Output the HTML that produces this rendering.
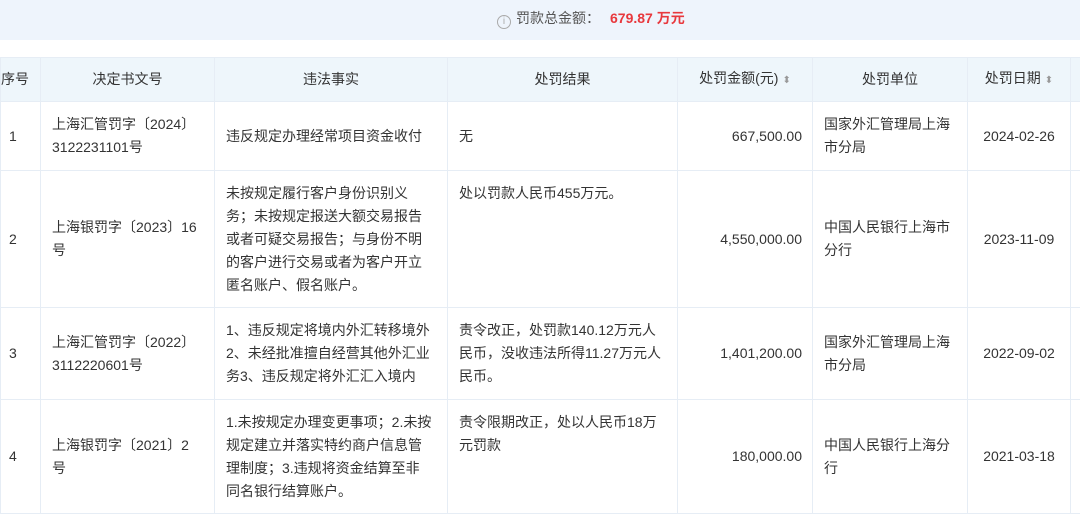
<!DOCTYPE html>
<html><head><meta charset="utf-8"><style>
body{margin:0;width:1080px;height:519px;overflow:hidden;background:#fff;font-family:"Liberation Sans","Noto Sans CJK SC",sans-serif;color:#333;font-size:14px}
.top{position:absolute;left:0;top:0;width:1080px;height:40px;background:#eef4fc}
.top .t{position:absolute;left:497px;top:8px;font-size:14px;line-height:20px;color:#555}
.top .t b{color:#e8383d;margin-left:10px}
.ic{display:inline-block;width:12px;height:12px;border:1px solid #aaa;border-radius:50%;font-size:10px;line-height:12px;text-align:center;color:#aaa;margin-right:5px;vertical-align:-1px}
table{position:absolute;left:0;top:57px;border-collapse:collapse;table-layout:fixed;width:1080px}
td,th{border:1px solid #e6edf5;padding:0 14px 0 11px;line-height:23px;vertical-align:middle;text-align:left;font-weight:normal;box-sizing:border-box}
th{background:#eef6fb;height:44px;text-align:center;color:#333;padding:0}
td.c{text-align:center;padding:0}
td.r{text-align:right;padding-right:10px}
td.tp{vertical-align:top;padding-top:11px}
.s{color:#999;font-size:10px;margin-left:4px}
</style></head><body>
<div class="top"><div class="t"><span class="ic">i</span>罚款总金额：<b>679.87 万元</b></div></div>
<table>
<colgroup><col style="width:40px"><col style="width:174px"><col style="width:233px"><col style="width:230px"><col style="width:135px"><col style="width:155px"><col style="width:103px"><col style="width:10px"></colgroup>
<tr style="height:44px"><th style="text-align:left;padding-left:0">序号</th><th>决定书文号</th><th>违法事实</th><th>处罚结果</th><th>处罚金额(元)<span class="s">⬍</span></th><th>处罚单位</th><th>处罚日期<span class="s">⬍</span></th><th></th></tr>
<tr style="height:69px"><td style="padding-left:8px">1</td><td>上海汇管罚字〔2024〕3122231101号</td><td>违反规定办理经常项目资金收付</td><td>无</td><td class="r">667,500.00</td><td>国家外汇管理局上海市分局</td><td class="c">2024-02-26</td><td></td></tr>
<tr style="height:137px"><td style="padding-left:8px">2</td><td>上海银罚字〔2023〕16号</td><td>未按规定履行客户身份识别义务；未按规定报送大额交易报告或者可疑交易报告；与身份不明的客户进行交易或者为客户开立匿名账户、假名账户。</td><td class="tp">处以罚款人民币455万元。</td><td class="r">4,550,000.00</td><td>中国人民银行上海市分行</td><td class="c">2023-11-09</td><td></td></tr>
<tr style="height:92px"><td style="padding-left:8px">3</td><td>上海汇管罚字〔2022〕3112220601号</td><td>1、违反规定将境内外汇转移境外2、未经批准擅自经营其他外汇业务3、违反规定将外汇汇入境内</td><td>责令改正，处罚款140.12万元人民币，没收违法所得11.27万元人民币。</td><td class="r">1,401,200.00</td><td>国家外汇管理局上海市分局</td><td class="c">2022-09-02</td><td></td></tr>
<tr style="height:114px"><td style="padding-left:8px">4</td><td>上海银罚字〔2021〕2<br>号</td><td>1.未按规定办理变更事项；2.未按规定建立并落实特约商户信息管理制度；3.违规将资金结算至非同名银行结算账户。</td><td class="tp">责令限期改正，处以人民币18万元罚款</td><td class="r">180,000.00</td><td>中国人民银行上海分行</td><td class="c">2021-03-18</td><td></td></tr>
</table>
</body></html>
